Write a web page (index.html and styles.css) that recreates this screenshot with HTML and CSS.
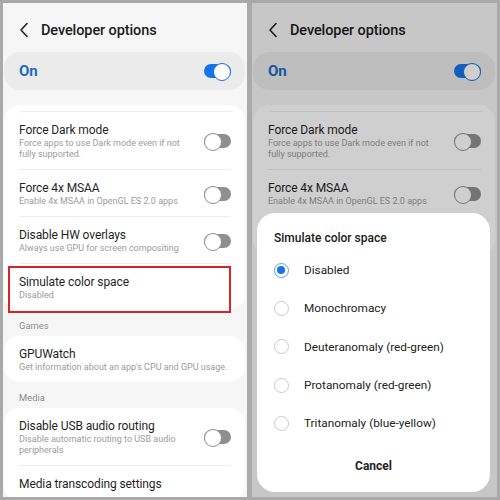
FILE: index.html
```html
<!DOCTYPE html>
<html>
<head>
<meta charset="utf-8">
<link rel="stylesheet" href="styles.css">
</head>
<body>
<div class="frame">
  <section class="screen">
    <header class="appbar">
      <svg class="back" width="10" height="16" viewBox="0 0 10 16"><path d="M8 1.5 L2 8 L8 14.5" fill="none" stroke="#222" stroke-width="1.6" stroke-linecap="round" stroke-linejoin="round"/></svg>
      <h1 class="title">Developer options</h1>
    </header>
    <div class="card master">
      <span class="on">On</span>
      <span class="toggle is-on"></span>
    </div>
    <div class="card list">
      <div class="stub"></div>
      <div class="item"><div class="text"><div class="t">Force Dark mode</div><div class="s">Force apps to use Dark mode even if not fully supported.</div></div><span class="toggle"></span></div>
      <div class="item"><div class="text"><div class="t">Force 4x MSAA</div><div class="s">Enable 4x MSAA in OpenGL ES 2.0 apps</div></div><span class="toggle"></span></div>
      <div class="item"><div class="text"><div class="t">Disable HW overlays</div><div class="s">Always use GPU for screen compositing</div></div><span class="toggle"></span></div>
      <div class="item marked"><div class="text"><div class="t">Simulate color space</div><div class="s">Disabled</div></div><span class="highlight"></span></div>
    </div>
    <div class="section">Games</div>
    <div class="card list">
      <div class="item"><div class="text wide"><div class="t">GPUWatch</div><div class="s">Get information about an app's CPU and GPU usage.</div></div></div>
    </div>
    <div class="section">Media</div>
    <div class="card list">
      <div class="item"><div class="text"><div class="t">Disable USB audio routing</div><div class="s">Disable automatic routing to USB audio peripherals</div></div><span class="toggle"></span></div>
      <div class="item"><div class="text"><div class="t">Media transcoding settings</div></div></div>
    </div>
  </section>

  <section class="screen dimmed">
    <header class="appbar">
      <svg class="back" width="10" height="16" viewBox="0 0 10 16"><path d="M8 1.5 L2 8 L8 14.5" fill="none" stroke="#222" stroke-width="1.6" stroke-linecap="round" stroke-linejoin="round"/></svg>
      <h1 class="title">Developer options</h1>
    </header>
    <div class="card master">
      <span class="on">On</span>
      <span class="toggle is-on"></span>
    </div>
    <div class="card list">
      <div class="stub"></div>
      <div class="item"><div class="text"><div class="t">Force Dark mode</div><div class="s">Force apps to use Dark mode even if not fully supported.</div></div><span class="toggle"></span></div>
      <div class="item"><div class="text"><div class="t">Force 4x MSAA</div><div class="s">Enable 4x MSAA in OpenGL ES 2.0 apps</div></div><span class="toggle"></span></div>
      <div class="tail"></div>
    </div>
    <div class="scrim"></div>
    <div class="dialog">
      <div class="dtitle">Simulate color space</div>
      <ul class="options">
        <li class="opt"><span class="radio checked"></span>Disabled</li>
        <li class="opt"><span class="radio"></span>Monochromacy</li>
        <li class="opt"><span class="radio"></span>Deuteranomaly (red-green)</li>
        <li class="opt"><span class="radio"></span>Protanomaly (red-green)</li>
        <li class="opt"><span class="radio"></span>Tritanomaly (blue-yellow)</li>
      </ul>
      <div class="cancel">Cancel</div>
    </div>
  </section>
</div>
</body>
</html>
```
FILE: styles.css
```css
* { box-sizing: border-box; }
html, body { margin: 0; padding: 0; }
body {
  width: 500px; height: 500px; overflow: hidden;
  background: #a9a9a9;
  font-family: Roboto, "Noto Sans", sans-serif;
  color: #1f1f1f;
}
.frame {
  display: flex; gap: 5px;
  padding: 3px;
  height: 500px;
}
.screen {
  position: relative;
  width: 244px; height: 494px;
  background: #f6f6f6;
  overflow: hidden;
  flex: none;
}
.screen + .screen { width: 245px; }
.appbar {
  height: 49px;
  display: flex; align-items: center;
  padding: 5px 0 0 16px;
}
.back { flex: none; margin-right: 12px; }
.title {
  margin: 0;
  font-size: 14.5px; font-weight: 500;
  letter-spacing: -0.1px;
  color: #1c1c1c;
}
.card {
  background: #fff;
  margin: 0 2px 0 1px;
  border-radius: 16px;
}
.master {
  background: #ebebeb;
  height: 38px;
  display: flex; align-items: center; justify-content: space-between;
  padding: 0 14px 0 15px;
  margin-bottom: 15px;
}
.on { font-size: 15px; font-weight: 700; color: #1b6cc4; }
.toggle {
  position: relative; flex: none;
  width: 27px; height: 14px;
  border-radius: 7px;
  background: #8f8f8f;
}
.toggle::after {
  content: ""; position: absolute;
  left: 0; top: -1px;
  width: 16px; height: 16px;
  border-radius: 50%;
  background: #fff;
  border: 1.5px solid #8f8f8f;
}
.toggle.is-on { background: #1574ea; }
.toggle.is-on::after { left: auto; right: 0; border-color: #1574ea; }
.list { padding: 0 14px 0 15px; }
.stub { height: 7px; border-bottom: 1px solid #ededed; margin: 0 -2px 0 1px; }
.tail { height: 40px; }
.item {
  position: relative;
  display: flex; align-items: center; justify-content: space-between;
  padding: 10px 0 9px;
}
.item + .item { border-top: 1px solid #ededed; }
.text { flex: 1; min-width: 0; max-width: 166px; }
.text.wide { max-width: none; }
.text.wide .s { white-space: nowrap; }
.t { font-size: 12px; line-height: 16px; letter-spacing: -0.1px; color: #1f1f1f; white-space: nowrap; }
.s { font-size: 9px; line-height: 11px; color: #9b9b9b; }
.highlight {
  position: absolute;
  top: 2px; bottom: -3px; left: -11px; right: 0;
  border: 2px solid #d8232b;
}
.marked { z-index: 1; }
.section {
  font-size: 9.4px; color: #8c8c8c;
  line-height: 12px;
  padding: 10px 0 4px 16px;
}
.scrim {
  position: absolute; inset: 0;
  background: rgba(0,0,0,0.19);
}
.dialog {
  position: absolute;
  left: 5px; right: 7px; top: 210px; bottom: 5px;
  background: #fff;
  border-radius: 18px;
  padding: 17px 0 0;
}
.dtitle {
  font-size: 12px; font-weight: 500; line-height: 16px;
  padding-left: 17px; color: #1a1a1a;
}
.options { list-style: none; margin: 5px 0 0; padding: 0; }
.opt {
  height: 38.3px;
  display: flex; align-items: center;
  padding-left: 17px;
  font-size: 11.8px; color: #222;
}
.radio {
  flex: none;
  width: 15px; height: 15px; border-radius: 50%;
  border: 1.5px solid #c9c9c9;
  margin-right: 15px;
  position: relative;
}
.radio.checked { border-color: #5a9ff0; }
.radio.checked::after {
  content: ""; position: absolute;
  left: 2px; top: 2px; width: 8px; height: 8px; border-radius: 50%;
  background: #1573ea;
}
.cancel {
  margin-top: 16px;
  text-align: center;
  font-size: 12px; font-weight: 700; line-height: 16px; color: #1f1f1f;
}
```
